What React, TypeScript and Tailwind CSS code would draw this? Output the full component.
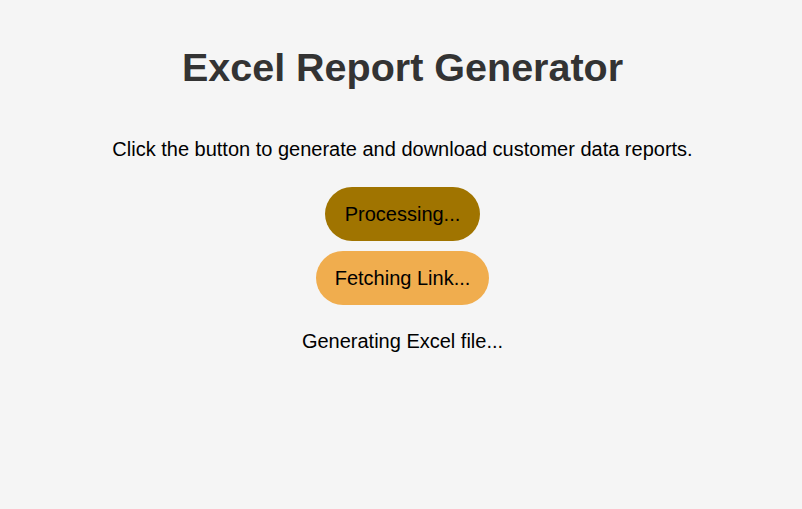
export default function App() {
  return (
    <div
      className="min-h-[509px] bg-[#f5f5f5] text-black flex flex-col items-center pl-[3px]"
      style={{ fontFamily: '"Liberation Sans", Arial, sans-serif' }}
    >
      <h1 className="mt-[44px] text-[39.5px] leading-[46px] font-bold text-[#333333]">
        Excel Report Generator
      </h1>
      <p className="mt-[48px] text-[20px] leading-[23px]">
        Click the button to generate and download customer data reports.
      </p>
      <div className="mt-[26px] flex flex-col items-center gap-[10px]">
        <button className="h-[54px] px-[20px] rounded-full bg-[#a07400] text-[20px]">
          Processing...
        </button>
        <button className="h-[54px] px-[19px] rounded-full bg-[#f0ad4e] text-[20px]">
          Fetching Link...
        </button>
      </div>
      <p className="mt-[25px] text-[20px] leading-[23px]">Generating Excel file...</p>
    </div>
  )
}
